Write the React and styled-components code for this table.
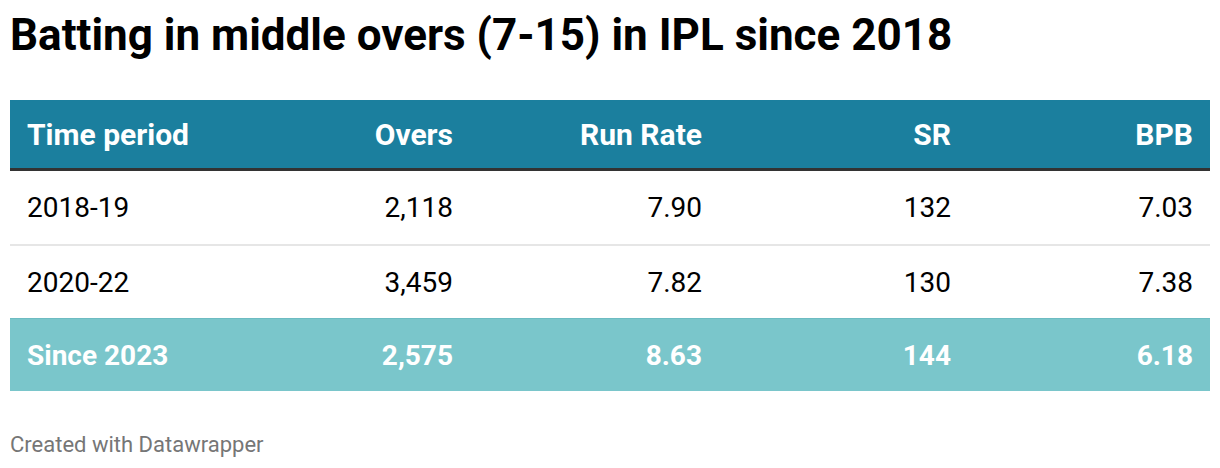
import styled, { createGlobalStyle } from "styled-components";

const GlobalStyle = createGlobalStyle`
  body {
    margin: 0;
    background: #ffffff;
    font-family: Roboto, "Liberation Sans", sans-serif;
  }
`;

const Chart = styled.div`
  padding: 0 10px;
  width: 1200px;
`;

const Title = styled.h1`
  margin: 0;
  padding-top: 9px;
  height: 100px;
  box-sizing: border-box;
  font-size: 44px;
  font-weight: 700;
  line-height: 52px;
  color: #000;
`;

const Table = styled.div`
  display: grid;
  grid-template-columns: 220px 240px 249px 249px 242px;
`;

const Row = styled.div`
  display: contents;
`;

const Cell = styled.div`
  display: flex;
  align-items: center;
  justify-content: ${(p) => (p.$left ? "flex-start" : "flex-end")};
  padding: 0 17px;
  box-sizing: border-box;
  white-space: nowrap;
  font-size: ${(p) => p.$size || 28}px;
  height: ${(p) => p.$h}px;
  background: ${(p) => p.$bg || "transparent"};
  color: ${(p) => p.$color || "#000"};
  font-weight: ${(p) => (p.$bold ? 700 : 400)};
  border-bottom: ${(p) => p.$bottom || "none"};
  border-top: ${(p) => p.$top || "none"};
`;

const Footer = styled.div`
  margin-top: 42px;
  font-size: 22px;
  line-height: 24px;
  color: #767676;
`;

const head = ["Time period", "Overs", "Run Rate", "SR", "BPB"];
const rows = [
  ["2018-19", "2,118", "7.90", "132", "7.03"],
  ["2020-22", "3,459", "7.82", "130", "7.38"],
];
const total = ["Since 2023", "2,575", "8.63", "144", "6.18"];

export default function App() {
  return (
    <>
      <GlobalStyle />
      <Chart>
        <Title>Batting in middle overs (7-15) in IPL since 2018</Title>
        <Table>
          <Row>
            {head.map((h, i) => (
              <Cell
                key={h}
                $left={i === 0}
                $h={71}
                $size={30}
                $bg="#1b7f9e"
                $color="#fff"
                $bold
                $bottom="3px solid #333"
              >
                {h}
              </Cell>
            ))}
          </Row>
          {rows.map((r, ri) => (
            <Row key={r[0]}>
              {r.map((v, i) => (
                <Cell
                  key={i}
                  $left={i === 0}
                  $h={ri === 0 ? 75 : 72}
                  $bottom={ri === 0 ? "2px solid #e6e6e6" : "none"}
                >
                  {v}
                </Cell>
              ))}
            </Row>
          ))}
          <Row>
            {total.map((v, i) => (
              <Cell
                key={i}
                $left={i === 0}
                $h={73}
                $bg="#7ac6cb"
                $color="#fff"
                $bold
                $top="1px solid #6dbcc2"
              >
                {v}
              </Cell>
            ))}
          </Row>
        </Table>
        <Footer>Created with Datawrapper</Footer>
      </Chart>
    </>
  );
}
